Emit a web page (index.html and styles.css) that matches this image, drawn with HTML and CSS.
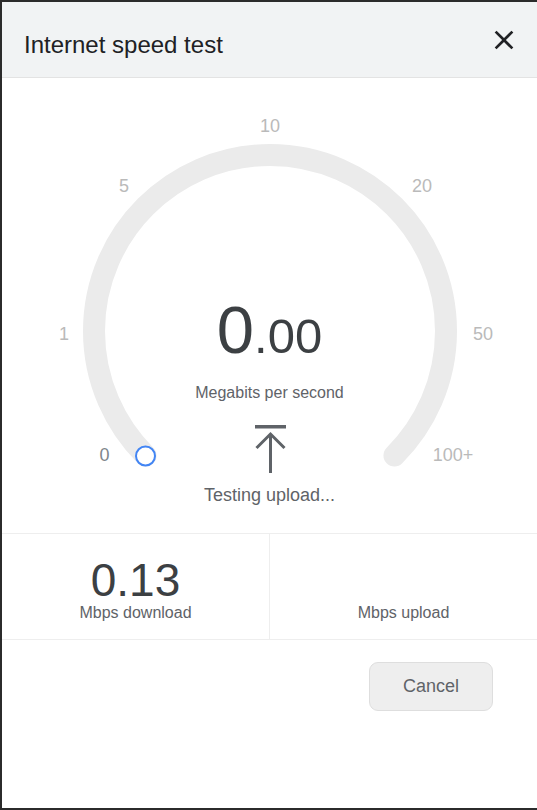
FILE: index.html
```html
<!DOCTYPE html>
<html lang="en">
<head>
  <meta charset="UTF-8">
  <title>Internet speed test</title>
  <link rel="stylesheet" href="styles.css">
</head>
<body>

  <div class="dialog">
    <div class="dialog-header">
      <h1>Internet speed test</h1>
      <button class="close" aria-label="Close">
        <svg width="32" height="32" viewBox="0 0 24 24"><path d="M19 6.41L17.59 5 12 10.59 6.41 5 5 6.41 10.59 12 5 17.59 6.41 19 12 13.41 17.59 19 19 17.59 13.41 12z"/></svg>
      </button>
    </div>

    <div class="gauge">
      <svg class="dial" width="535" height="455" viewBox="2 78 535 455">
        <path class="track" d="M145.55 455.45 A176 176 0 1 1 394.45 455.45"/>
        <circle class="needle" cx="145.5" cy="456" r="9.5"/>
        <text x="270" y="132">10</text>
        <text x="124" y="192">5</text>
        <text x="422" y="192">20</text>
        <text x="64" y="340">1</text>
        <text x="483" y="340">50</text>
        <text x="104.5" y="461" class="current">0</text>
        <text x="453" y="461">100+</text>
      </svg>

      <div class="speed"><span class="int">0</span><span class="frac">.00</span></div>
      <div class="unit">Megabits per second</div>
      <svg class="upload-icon" width="34" height="50" viewBox="0 0 34 50">
        <rect x="2" y="1" width="31" height="3.5"/>
        <path d="M17.5 10 V49 M3.5 24 L17.5 10 L31.5 24"/>
      </svg>
      <div class="status">Testing upload...</div>
    </div>

    <div class="results">
      <div class="result">
        <div class="value">0.13</div>
        <div class="label">Mbps download</div>
      </div>
      <div class="result">
        <div class="value"></div>
        <div class="label">Mbps upload</div>
      </div>
    </div>

    <div class="actions">
      <button class="cancel">Cancel</button>
    </div>
  </div>

</body>
</html>
```

FILE: styles.css
```css
body {
  margin: 0;
  background-color: #2b2b2b;
  font-family: "Liberation Sans", Arial, sans-serif;
}

.dialog {
  margin: 2px 0 0 2px;
  height: 806px;
  background: white;
}

.dialog-header {
  display: flex;
  align-items: center;
  justify-content: space-between;
  height: 75px;
  padding: 0 17px 0 22px;
  background-color: #f1f3f4;
  border-bottom: 1px solid #e3e3e3;
}

.dialog-header h1 {
  margin: 10px 0 0;
  font-size: 24px;
  font-weight: normal;
  line-height: 28px;
  color: #202124;
}

.close {
  display: block;
  width: 32px;
  height: 32px;
  padding: 0;
  border: none;
  background: none;
  cursor: pointer;
}

.close svg {
  display: block;
  fill: #202124;
}

/* gauge */
.gauge {
  position: relative;
  box-sizing: border-box;
  height: 456px;
  padding-top: 218px;
  border-bottom: 1px solid #eeeeee;
  text-align: center;
}

.dial {
  position: absolute;
  top: 0;
  left: 0;
}

.dial .track {
  fill: none;
  stroke: #ebebeb;
  stroke-width: 22;
  stroke-linecap: round;
}

.dial .needle {
  fill: white;
  stroke: #4285f4;
  stroke-width: 2;
}

.dial text {
  font-size: 18px;
  fill: #bababa;
  text-anchor: middle;
}

.dial text.current {
  fill: #80868b;
}

.speed {
  position: relative;
  height: 67px;
  font-size: 67px;
  line-height: 67px;
  color: #3c4043;
}

.speed .frac {
  font-size: 49px;
}

.unit {
  position: relative;
  margin-top: 20px;
  font-size: 16px;
  line-height: 20px;
  color: #5f6368;
}

.upload-icon {
  position: relative;
  display: block;
  margin: 21px auto 0;
}

.upload-icon rect {
  fill: #5f6368;
}

.upload-icon path {
  fill: none;
  stroke: #5f6368;
  stroke-width: 3;
}

.status {
  position: relative;
  margin-top: 11px;
  font-size: 18px;
  line-height: 20px;
  color: #5f6368;
}

/* results */
.results {
  display: flex;
  height: 105px;
  border-bottom: 1px solid #eeeeee;
}

.result {
  flex: 1;
  padding-top: 23px;
  text-align: center;
}

.result:first-child {
  border-right: 1px solid #eeeeee;
}

.value {
  height: 46px;
  font-size: 46px;
  line-height: 46px;
  color: #3c4043;
}

.label {
  font-size: 16px;
  line-height: 20px;
  color: #5f6368;
}

.actions {
  display: flex;
  justify-content: flex-end;
  padding: 22px 44px 0 0;
}

.cancel {
  width: 124px;
  height: 49px;
  background-color: #eeeeee;
  border: 1px solid #dedede;
  border-radius: 9px;
  font-family: "Liberation Sans", Arial, sans-serif;
  font-size: 18px;
  color: #5f6368;
  cursor: pointer;
}
```
